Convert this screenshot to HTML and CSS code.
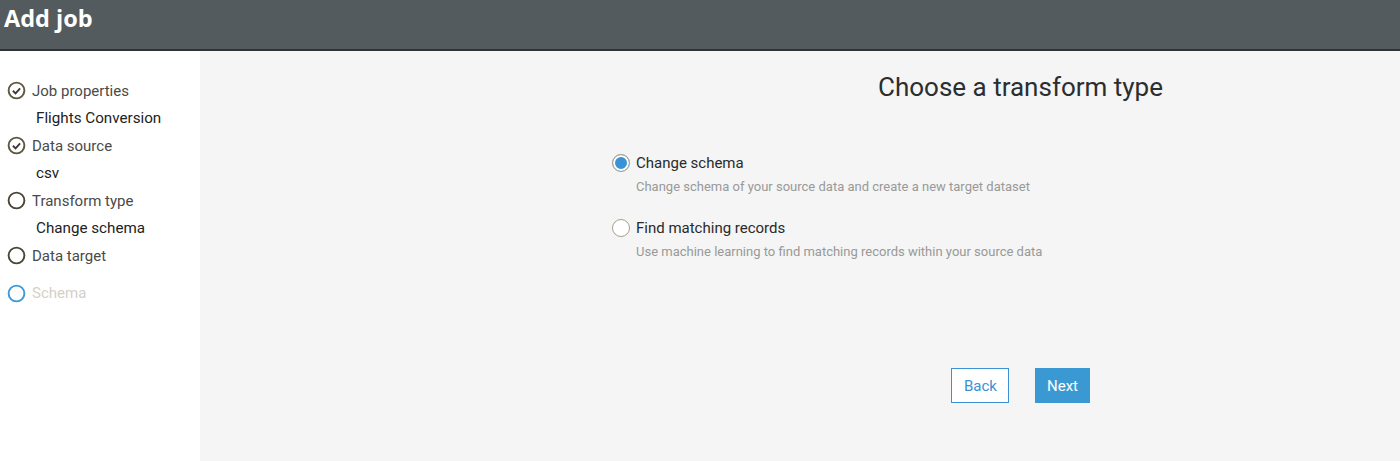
FILE: index.html
```html
<!DOCTYPE html>
<html>
<head>
<meta charset="utf-8">
<link rel="stylesheet" href="styles.css">
</head>
<body>
<header class="topbar"><h1 class="topbar-title">Add job</h1></header>
<div class="layout">
  <nav class="steps">
    <div class="step done">
      <svg class="step-icon" viewBox="0 0 20 20"><circle cx="10" cy="10" r="8.3" fill="none" stroke="#5e5640" stroke-width="2"/><path d="M6.2 10.3 L9 13 L13.8 7.8" fill="none" stroke="#3d3a33" stroke-width="2"/></svg>
      <span class="step-label">Job properties</span>
    </div>
    <div class="step-sub">Flights Conversion</div>
    <div class="step done">
      <svg class="step-icon" viewBox="0 0 20 20"><circle cx="10" cy="10" r="8.3" fill="none" stroke="#5e5640" stroke-width="2"/><path d="M6.2 10.3 L9 13 L13.8 7.8" fill="none" stroke="#3d3a33" stroke-width="2"/></svg>
      <span class="step-label">Data source</span>
    </div>
    <div class="step-sub">csv</div>
    <div class="step">
      <svg class="step-icon" viewBox="0 0 20 20"><circle cx="10" cy="10" r="8.3" fill="none" stroke="#4a4536" stroke-width="2"/></svg>
      <span class="step-label">Transform type</span>
    </div>
    <div class="step-sub">Change schema</div>
    <div class="step">
      <svg class="step-icon" viewBox="0 0 20 20"><circle cx="10" cy="10" r="8.3" fill="none" stroke="#4a4536" stroke-width="2"/></svg>
      <span class="step-label">Data target</span>
    </div>
    <div class="step disabled">
      <svg class="step-icon" viewBox="0 0 20 20"><circle cx="10" cy="10" r="8.3" fill="none" stroke="#3a9ad9" stroke-width="2"/></svg>
      <span class="step-label">Schema</span>
    </div>
  </nav>
  <main class="content">
    <div class="column">
      <h2 class="page-title">Choose a transform type</h2>
      <div class="options">
        <label class="option">
          <span class="radio checked"></span>
          <span class="option-text">
            <span class="option-name">Change schema</span>
            <span class="option-desc">Change schema of your source data and create a new target dataset</span>
          </span>
        </label>
        <label class="option">
          <span class="radio"></span>
          <span class="option-text">
            <span class="option-name">Find matching records</span>
            <span class="option-desc">Use machine learning to find matching records within your source data</span>
          </span>
        </label>
      </div>
      <div class="actions">
        <button class="btn btn-secondary">Back</button>
        <button class="btn btn-primary">Next</button>
      </div>
    </div>
  </main>
</div>
</body>
</html>
```
FILE: styles.css
```css
* { box-sizing: border-box; }
html, body { margin: 0; padding: 0; height: 100%; }
body {
  font-family: Roboto, "Liberation Sans", sans-serif;
  background: #ffffff;
  color: #333;
}
.topbar {
  height: 51px;
  background: #545b5e;
  border-bottom: 2px solid #2f3335;
  padding: 0 4px;
}
.topbar-title {
  margin: 0;
  font-family: "Open Sans", "Liberation Sans", sans-serif;
  font-weight: 700;
  font-size: 23.5px;
  line-height: 37px;
  color: #fff;
}
.layout {
  display: flex;
  height: 410px;
}
.steps {
  width: 200px;
  flex: none;
  padding: 26px 0 0 7px;
  background: #fff;
}
.step {
  display: flex;
  align-items: center;
  height: 27.5px;
  gap: 6px;
}
.step-icon { width: 19px; height: 19px; flex: none; }
.step-label { font-size: 15px; color: #4a4a48; }
.step.disabled .step-label { color: #d4d0c8; }
.step.disabled { margin-top: 10px; }
.step-sub {
  height: 27.5px;
  line-height: 27.5px;
  padding-left: 29px;
  font-size: 15.2px;
  color: #222;
}
.content {
  flex: 1;
  background: #f4f5f4;
}
.column {
  margin-left: 412px;
  padding-top: 21px;
}
.page-title {
  margin: 0 0 51px 266px;
  font-weight: 400;
  font-size: 26px;
  line-height: 30px;
  color: #2b2e30;
}
.options { display: flex; flex-direction: column; gap: 21px; }
.option { display: flex; gap: 6px; align-items: flex-start; }
.radio {
  width: 18px; height: 18px;
  border-radius: 50%;
  border: 1px solid #a8a08a;
  background: #fff;
  margin-top: 1px;
  flex: none;
}
.radio.checked {
  background: #3a91d5;
  box-shadow: inset 0 0 0 2px #fff;
}
.option-text { display: flex; flex-direction: column; }
.option-name { font-size: 15px; line-height: 20px; color: #2a2a2a; }
.option-desc { font-size: 13px; line-height: 20px; margin-top: 4px; color: #999; }
.actions {
  display: flex;
  gap: 26px;
  margin: 106px 0 0 339px;
}
.btn {
  height: 35px;
  font-family: Roboto, "Liberation Sans", sans-serif;
  font-size: 15px;
  padding: 0 12px;
  cursor: pointer;
}
.btn-secondary {
  width: 58px;
  background: #fff;
  color: #3a91d5;
  border: 1px solid #3a91d5;
}
.btn-primary {
  width: 55px;
  background: #3a99d3;
  color: #fff;
  border: none;
}
```
